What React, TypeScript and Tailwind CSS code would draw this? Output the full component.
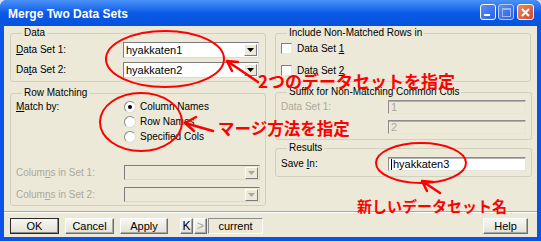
import React from "react";

const Arrow = ({ disabled }: { disabled?: boolean }) => (
  <svg width="7" height="4" viewBox="0 0 7 4">
    <path d="M0 0h7L3.5 4z" fill={disabled ? "#aca899" : "#000"} />
  </svg>
);

function Combo({ value, disabled }: { value?: string; disabled?: boolean }) {
  return (
    <div
      className={`flex h-full w-[136px] items-center border border-t-[#7b7b7b] border-l-[#7b7b7b] border-b-[#d8d8d8] border-r-[#d8d8d8] pl-[2px] pr-[1px] ${
        disabled ? "bg-[#ECE9D8]" : "bg-white"
      }`}
    >
      <span className="flex-1 text-[11px]">{value}</span>
      <div className="flex h-[12px] w-[13px] items-center justify-center border border-t-white border-l-white border-b-[#7b7b7b] border-r-[#7b7b7b] bg-[#ECE9D8]">
        <Arrow disabled={disabled} />
      </div>
    </div>
  );
}

function TextBox({ value, disabled, caret }: { value: string; disabled?: boolean; caret?: boolean }) {
  return (
    <div
      className={`flex h-[14px] w-[138px] items-center border border-t-[#8d8d8d] border-l-[#8d8d8d] border-b-[#e4e4e4] border-r-[#e4e4e4] pl-[2px] shadow-[inset_0_1px_0_#b0b0b0] ${
        disabled ? "bg-[#ECE9D8] text-[#aca899]" : "bg-white"
      }`}
    >
      {caret && <span className="mr-[1px] h-[11px] w-px bg-black" />}
      <span className="text-[11px]">{value}</span>
    </div>
  );
}

function Radio({ checked, children }: { checked?: boolean; children: React.ReactNode }) {
  return (
    <div className="flex h-[15px] items-center gap-[4px]">
      <span className="flex h-[12px] w-[12px] items-center justify-center rounded-full border border-t-[#8a8a8a] border-l-[#8a8a8a] border-b-[#dcdcdc] border-r-[#dcdcdc] bg-white">
        {checked && <span className="h-[4px] w-[4px] rounded-full bg-black" />}
      </span>
      <span>{children}</span>
    </div>
  );
}

function Check({ children }: { children: React.ReactNode }) {
  return (
    <div className="flex h-[13px] items-center gap-[5px]">
      <span className="h-[11px] w-[11px] border border-t-[#7d7d7d] border-l-[#7d7d7d] border-b-[#e6e6e6] border-r-[#e6e6e6] bg-white" />
      <span>{children}</span>
    </div>
  );
}

function Group({ title, className, children }: { title: string; className?: string; children: React.ReactNode }) {
  return (
    <fieldset className={`rounded-[3px] border border-[#d0d0bf] ${className ?? ""}`}>
      <legend className="ml-[6px] px-[2px] leading-[12px]">{title}</legend>
      {children}
    </fieldset>
  );
}

function Button({ children, primary, className }: { children: React.ReactNode; primary?: boolean; className?: string }) {
  return (
    <div
      className={`flex h-[16px] items-center justify-center border bg-linear-to-b from-[#f7f7f3] to-[#e4e1d2] text-[11px] ${
        primary
          ? "border-[#2a2a2a] shadow-[inset_-1px_-1px_0_#8a8a8a]"
          : "border-t-white border-l-white border-b-[#6f6f6f] border-r-[#6f6f6f] shadow-[inset_-1px_-1px_0_#a9a9a9]"
      } ${className ?? ""}`}
    >
      {children}
    </div>
  );
}

export default function App() {
  return (
    <div className="relative h-[242px] w-[541px] overflow-hidden bg-[#d6dff0] text-[10px] leading-none text-black [font-family:'Liberation_Sans',Arial,sans-serif]">
      <div className="flex h-[241px] flex-col rounded-t-[7px] bg-[#0b52e6]">
        {/* title bar */}
        <div className="flex h-[26px] items-center rounded-t-[7px] bg-linear-to-b from-[#4a92f8] via-[#0a5ae8] to-[#0752dc] px-[7px]">
          <span className="mt-[2px] pl-px text-[12px] font-bold leading-[13px] text-white">Merge Two Data Sets</span>
          <div className="mb-[2px] ml-auto flex items-center">
            <div className="relative h-[16px] w-[16px] rounded-[3px] border border-white bg-linear-to-br from-[#5b8ff6] to-[#2a5ee6]">
              <span className="absolute bottom-[3px] left-[3px] h-[2px] w-[6px] bg-white" />
            </div>
            <div className="ml-[2px] flex h-[16px] w-[16px] items-center justify-center rounded-[3px] border border-[#b7c8f3] bg-linear-to-br from-[#5b8ff6] to-[#2a5ee6]">
              <span className="h-[9px] w-[9px] border border-t-2 border-[#9fb6ee]" />
            </div>
            <div className="ml-[3px] flex h-[16px] w-[17px] items-center justify-center rounded-[3px] border border-white bg-linear-to-br from-[#e98a6a] to-[#d8421e]">
              <svg width="9" height="9" viewBox="0 0 9 9">
                <path d="M1 1l7 7M8 1L1 8" stroke="#fff" strokeWidth="2" />
              </svg>
            </div>
          </div>
        </div>

        {/* body */}
        <div className="flex flex-1 px-[4px] pb-[4px]">
          <div className="flex flex-1 flex-col bg-[#ECE9D8]">
            <div className="flex gap-[9px] px-[6px] pt-[1px]">
              {/* left column */}
              <div className="flex w-[256px] flex-col gap-[5px]">
                <Group title="Data" className="px-[5px] pb-[3px] pt-[3px]">
                  <div className="flex h-[16px] items-center">
                    <span className="w-[107px]">
                      <span className="underline">D</span>ata Set 1:
                    </span>
                    <Combo value="hyakkaten1" />
                  </div>
                  <div className="mt-[4px] flex h-[16px] items-center">
                    <span className="w-[107px]">
                      Da<span className="underline">t</span>a Set 2:
                    </span>
                    <Combo value="hyakkaten2" />
                  </div>
                </Group>
                <Group title="Row Matching" className="px-[5px] pb-[3px]">
                  <div className="flex">
                    <div className="flex h-[15px] w-[108px] items-center">
                      <span>
                        <span className="underline">M</span>atch by:
                      </span>
                    </div>
                    <div className="flex flex-col">
                      <Radio checked>Column Names</Radio>
                      <Radio>Row Names</Radio>
                      <Radio>Specified Cols</Radio>
                    </div>
                  </div>
                  <div className="mt-[21px] flex h-[15px] items-center text-[#aca899]">
                    <span className="w-[108px]">
                      Colum<span className="underline">n</span>s in Set 1:
                    </span>
                    <Combo disabled />
                  </div>
                  <div className="mt-[7px] flex h-[15px] items-center text-[#aca899]">
                    <span className="w-[108px]">
                      Colum<span className="underline">n</span>s in Set 2:
                    </span>
                    <Combo disabled />
                  </div>
                </Group>
              </div>

              {/* right column */}
              <div className="flex w-[256px] flex-col">
                <Group title="Include Non-Matched Rows in" className="px-[5px] pb-[4px] pt-[3px]">
                  <Check>
                    Data Set <span className="underline">1</span>
                  </Check>
                  <div className="mt-[9px]">
                    <Check>
                      Data Set <span className="underline">2</span>
                    </Check>
                  </div>
                </Group>
                <Group title="Suffix for Non-Matching Common Cols" className="mt-[4px] px-[5px] pb-[5px] pt-[2px]">
                  <div className="flex items-center text-[#aca899]">
                    <span className="w-[107px]">Data Set 1:</span>
                    <TextBox value="1" disabled />
                  </div>
                  <div className="mt-[6px] flex items-center pl-[107px]">
                    <TextBox value="2" disabled />
                  </div>
                </Group>
                <Group title="Results" className="mt-[2px] px-[5px] pb-[5px] pt-[3px]">
                  <div className="flex items-center">
                    <span className="w-[107px]">
                      Save <span className="underline">I</span>n:
                    </span>
                    <TextBox value="hyakkaten3" caret />
                  </div>
                </Group>
              </div>
            </div>

            <div className="mt-[5px] h-[2px] border-t border-b border-t-[#aca899] border-b-white" />

            <div className="mt-[5px] flex items-center px-[6px]">
              <Button primary className="w-[49px]">
                OK
              </Button>
              <Button className="ml-[6px] w-[49px]">Cancel</Button>
              <Button className="ml-[6px] w-[48px]">Apply</Button>
              <Button className="ml-[12px] w-[13px] text-[12px]">K</Button>
              <Button className="ml-px w-[13px] text-[12px] text-[#aca899]">&gt;</Button>
              <div className="ml-px flex h-[16px] w-[55px] items-center justify-center border border-t-[#8d8d8d] border-l-[#8d8d8d] border-b-white border-r-white text-[11px]">
                current
              </div>
              <Button className="ml-auto mr-[3px] w-[45px]">Help</Button>
            </div>
          </div>
        </div>
      </div>

      {/* red annotations */}
      <svg className="pointer-events-none absolute inset-0" width="541" height="242" viewBox="0 0 541 242" fill="none" stroke="#ff0000" strokeWidth="2" strokeLinecap="round">
        <ellipse cx="165" cy="59" rx="59" ry="28" />
        <path d="M258 82L227 61M227 61l11 1M227 61l5 10" strokeWidth="2.5" />
        <ellipse cx="141" cy="122" rx="41" ry="29" />
        <path d="M213 131L185 123M185 123l11-6M185 123l9 8" strokeWidth="2.5" />
        <ellipse cx="421" cy="163" rx="45" ry="20" />
        <path d="M440 193L422 181M422 181l11 1M422 181l5 10" strokeWidth="2.5" />
      </svg>
      <span className="absolute left-[258px] top-[72px] text-[17px] font-bold leading-[17px] text-[#ff0000] [font-family:'Noto_Sans_CJK_JP',sans-serif]">
        2つのデータセットを指定
      </span>
      <span className="absolute left-[218px] top-[120px] text-[16.5px] font-bold leading-[17px] text-[#ff0000] [font-family:'Noto_Sans_CJK_JP',sans-serif]">
        マージ方法を指定
      </span>
      <span className="absolute left-[357px] top-[198px] text-[15px] font-bold leading-[16px] text-[#ff0000] [font-family:'Noto_Sans_CJK_JP',sans-serif]">
        新しいデータセット名
      </span>
    </div>
  );
}
